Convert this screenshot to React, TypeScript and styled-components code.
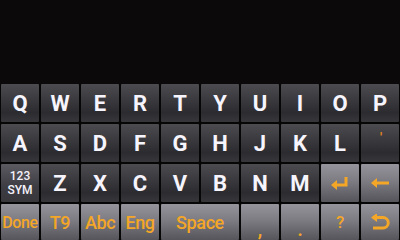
import React from "react";
import styled, { createGlobalStyle } from "styled-components";

const Global = createGlobalStyle`
  html, body { margin: 0; padding: 0; background: #0b0909; }
  body { width: 400px; height: 240px; overflow: hidden; font-family: Roboto, "Noto Sans", sans-serif; }
`;

const Screen = styled.div`
  width: 400px;
  height: 240px;
  background: #0b0909;
  display: flex;
  flex-direction: column;
  justify-content: flex-end;
`;

const Keyboard = styled.div`
  display: grid;
  grid-template-columns: repeat(10, 38px);
  grid-template-rows: 38px 38px 38px 36px;
  gap: 2px;
  padding: 0 1px;
  background: #070606;
`;

type Tone = "dark" | "light" | "sym";

const Key = styled.div<{ $tone: Tone; $span?: number; $orange?: boolean; $size?: number }>`
  grid-column: span ${(p) => p.$span ?? 1};
  display: flex;
  align-items: center;
  justify-content: center;
  border-radius: 1px;
  color: ${(p) => (p.$orange ? "#f4a626" : "#f6f4fc")};
  font-weight: ${(p) => (p.$orange ? 500 : 700)};
  font-size: ${(p) => p.$size ?? 22}px;
  letter-spacing: ${(p) => (p.$orange ? "-0.4px" : "0")};
  background: ${(p) =>
    p.$tone === "light"
      ? "linear-gradient(to bottom, #95949c 0%, #7d7c83 45%, #605f66 85%, #56555b 100%)"
      : p.$tone === "sym"
      ? "linear-gradient(to bottom, #5c5b62 0%, #3d3c42 60%, #38373c 100%)"
      : "linear-gradient(to bottom, #4c4b50 0%, #3b3a3f 40%, #2c2b30 75%, #37363b 100%)"};
`;

const SymLabel = styled.div`
  display: flex;
  flex-direction: column;
  align-items: center;
  font-size: 12px;
  line-height: 14px;
  font-weight: 500;
  color: #f4f2fa;
`;

const Tick = styled.span`
  font-size: 13px;
  font-weight: 700;
  color: #e8861a;
  margin-top: -12px;
  margin-left: 2px;
`;

const Punct = styled.span`
  font-size: 18px;
  font-weight: 700;
  color: #f4a626;
  margin-top: 14px;
`;

const Icon = styled.svg`
  display: block;
`;

const row1 = ["Q", "W", "E", "R", "T", "Y", "U", "I", "O", "P"];
const row2 = ["A", "S", "D", "F", "G", "H", "J", "K", "L"];
const row3 = ["Z", "X", "C", "V", "B", "N", "M"];

export default function App() {
  return (
    <Screen>
      <Global />
      <Keyboard>
        {row1.map((k) => (
          <Key key={k} $tone="dark">{k}</Key>
        ))}
        {row2.map((k) => (
          <Key key={k} $tone="dark">{k}</Key>
        ))}
        <Key $tone="dark">
          <Tick>'</Tick>
        </Key>
        <Key $tone="sym">
          <SymLabel>
            <span>123</span>
            <span>SYM</span>
          </SymLabel>
        </Key>
        {row3.map((k) => (
          <Key key={k} $tone="dark">{k}</Key>
        ))}
        <Key $tone="light">
          <Icon width="20" height="14" viewBox="0 0 20 14">
            <path d="M16 1 V9 H5" fill="none" stroke="#f4a626" strokeWidth="3" />
            <path d="M1 9 L7 4 V14 Z" fill="#f4a626" />
          </Icon>
        </Key>
        <Key $tone="light">
          <Icon width="20" height="12" viewBox="0 0 20 12">
            <path d="M19 6 H6" fill="none" stroke="#f4a626" strokeWidth="3" />
            <path d="M1 6 L7 1 V11 Z" fill="#f4a626" />
          </Icon>
        </Key>
        <Key $tone="light" $orange $size={16}>Done</Key>
        <Key $tone="light" $orange $size={18}>T9</Key>
        <Key $tone="light" $orange $size={18}>Abc</Key>
        <Key $tone="light" $orange $size={18}>Eng</Key>
        <Key $tone="light" $orange $span={2} $size={18}>Space</Key>
        <Key $tone="light">
          <Punct>,</Punct>
        </Key>
        <Key $tone="light">
          <Punct>.</Punct>
        </Key>
        <Key $tone="light" $orange $size={17}>?</Key>
        <Key $tone="light">
          <Icon width="20" height="16" viewBox="0 0 20 16">
            <path d="M6 3.5 H13 A5 5 0 0 1 13 14 H3" fill="none" stroke="#f4a626" strokeWidth="3" />
            <path d="M1 3.5 L7 -1 V8 Z" fill="#f4a626" />
          </Icon>
        </Key>
      </Keyboard>
    </Screen>
  );
}
